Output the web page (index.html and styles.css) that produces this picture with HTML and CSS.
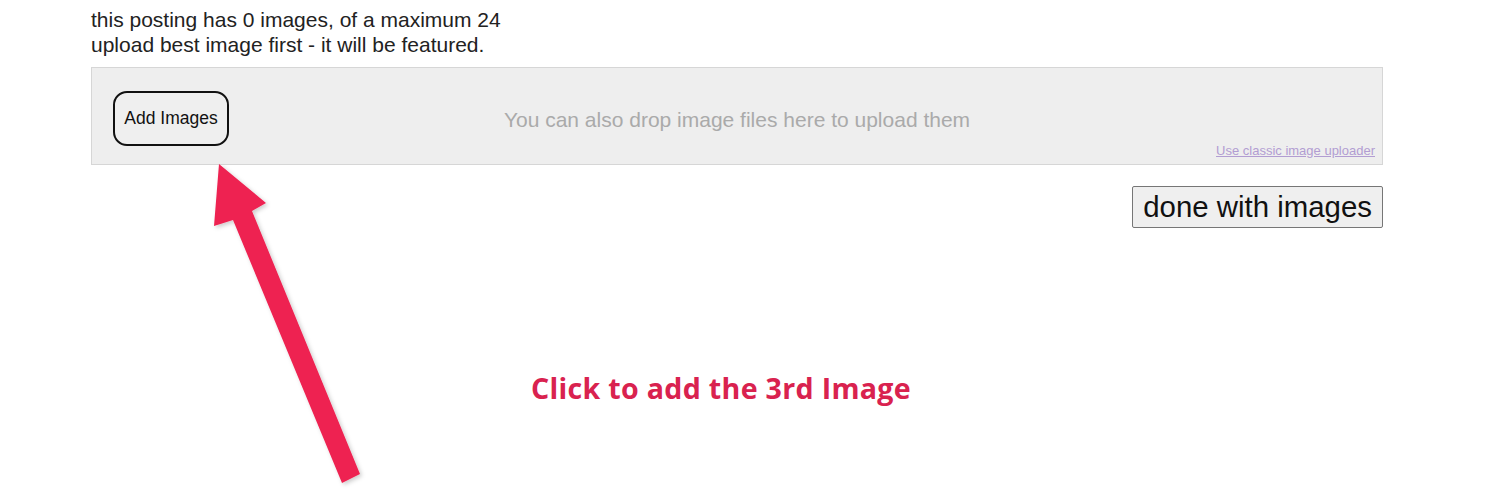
FILE: index.html
```html
<!DOCTYPE html>
<html>
<head>
<meta charset="utf-8">
<link rel="stylesheet" href="styles.css">
</head>
<body>
<div class="page">
  <div class="info">
    <div>this posting has 0 images, of a maximum 24</div>
    <div>upload best image first - it will be featured.</div>
  </div>
  <div class="dropzone">
    <button class="add-btn">Add Images</button>
    <div class="drop-text">You can also drop image files here to upload them</div>
    <a class="classic" href="#">Use classic image uploader</a>
  </div>
  <div class="done-row">
    <button class="done-btn">done with images</button>
  </div>
</div>
<svg class="arrow" width="1508" height="495" viewBox="0 0 1508 495">
  <defs>
    <filter id="sh" x="-20%" y="-20%" width="140%" height="140%">
      <feDropShadow dx="2" dy="2" stdDeviation="2" flood-color="#000" flood-opacity="0.2"/>
    </filter>
  </defs>
  <polygon filter="url(#sh)" fill="#ee2251" points="219,164 266,203 252,211 360,474 342,483 233,220 214,226"/>
</svg>
<div class="caption">Click to add the 3rd Image</div>
</body>
</html>
```
FILE: styles.css
```css
html, body {
  margin: 0;
  padding: 0;
  background: #fff;
}
body {
  font-family: "Liberation Sans", Arial, sans-serif;
  color: #222;
  position: relative;
  width: 1508px;
  height: 495px;
  overflow: hidden;
}
.page {
  width: 1292px;
  margin-left: 91px;
  padding-top: 7px;
}
.info {
  font-size: 21px;
  line-height: 25px;
  color: #222;
}
.dropzone {
  margin-top: 10px;
  height: 98px;
  background: #eeeeee;
  border: 1px solid #d6d6d6;
  box-sizing: border-box;
  display: flex;
  align-items: center;
  padding-left: 21px;
  position: relative;
}
.add-btn {
  width: 116px;
  height: 55px;
  border: 2px solid #111;
  border-radius: 14px;
  background: #efefef;
  font-family: "Liberation Sans", Arial, sans-serif;
  font-size: 17.5px;
  color: #111;
  padding: 0;
  margin-top: 4px;
}
.drop-text {
  flex: 1;
  text-align: center;
  font-size: 21px;
  color: #aaaaaa;
  padding-right: 137px;
  margin-top: 7px;
}
.classic {
  position: absolute;
  right: 7px;
  bottom: 6px;
  font-size: 13px;
  color: #b29dd2;
  text-decoration: underline;
}
.done-row {
  display: flex;
  justify-content: flex-end;
  margin-top: 21px;
}
.done-btn {
  height: 42px;
  padding: 0 10px;
  font-family: "Liberation Sans", Arial, sans-serif;
  font-size: 29.4px;
  color: #111;
  background: #efefef;
  border: 1px solid #767676;
  border-radius: 2px;
}
.arrow {
  position: absolute;
  left: 0;
  top: 0;
  pointer-events: none;
}
.caption {
  position: absolute;
  left: 531px;
  top: 368px;
  font-family: "Open Sans", Lato, sans-serif;
  font-weight: 700;
  font-size: 28.6px;
  color: #d9224f;
  letter-spacing: 0.3px;
}
```
